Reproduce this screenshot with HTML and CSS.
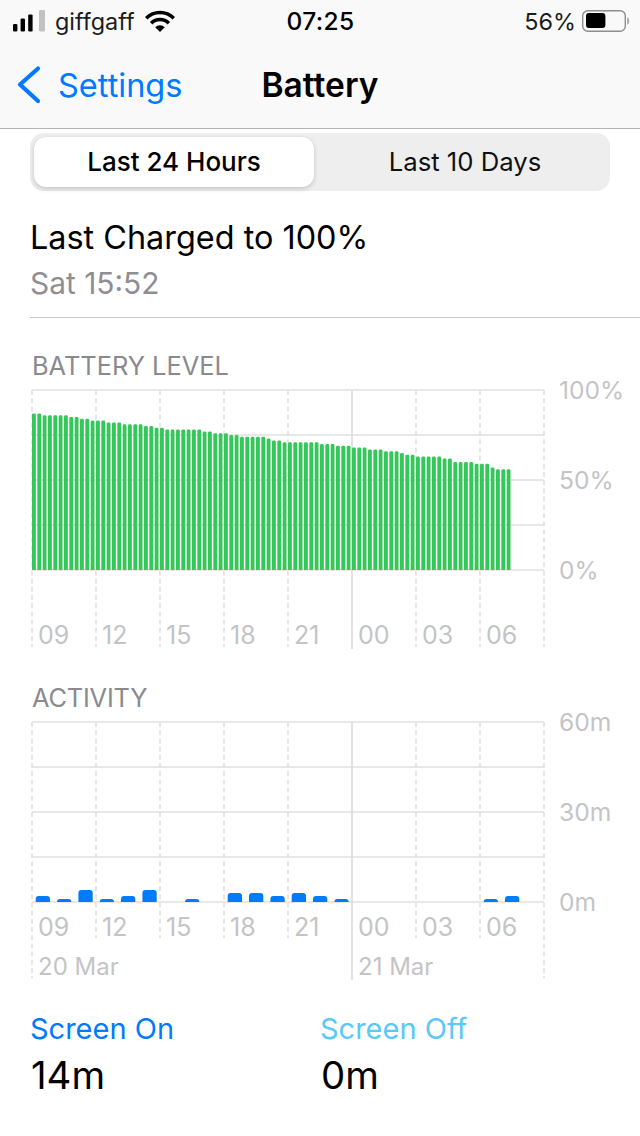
FILE: index.html
```html
<!DOCTYPE html>
<html lang="en">
<head>
<meta charset="utf-8">
<title>Battery</title>
<link rel="stylesheet" href="styles.css">
</head>
<body>
<header class="top">
  <div class="status">
    <div class="status-left">
      <svg class="signal" viewBox="0 0 34 22" width="34" height="22" aria-hidden="true">
        <rect x="0" y="14" width="4.4" height="7.4" rx="1.2"/>
        <rect x="7.6" y="8.4" width="4.4" height="13" rx="1.2"/>
        <rect x="15.2" y="4.4" width="4.4" height="17" rx="1.2"/>
        <rect class="off" x="26" y="0" width="6" height="21.4" rx="1.2"/>
      </svg>
      <span class="carrier">giffgaff</span>
      <svg class="wifi" viewBox="0 0 30 22" width="30" height="22" aria-hidden="true">
        <path class="arc" d="M1.2 8.2A19.5 19.5 0 0 1 28.8 8.2"/>
        <path class="arc" d="M6.16 13.16A12.5 12.5 0 0 1 23.84 13.16"/>
        <path d="M15 22L10.2 17.2A6.8 6.8 0 0 1 19.8 17.2Z"/>
      </svg>
    </div>
    <div class="time">07:25</div>
    <div class="status-right">
      <span class="pct">56%</span>
      <svg class="batt" viewBox="0 0 48 24" width="48" height="24" aria-hidden="true">
        <rect class="shell" x="0.7" y="1.7" width="42.6" height="20.6" rx="5"/>
        <rect x="4" y="4" width="19.4" height="15" rx="3"/>
        <path class="nub" d="M45.2 8.2C46.6 8.8 47.2 10 47.2 12S46.6 15.2 45.2 15.8Z"/>
      </svg>
    </div>
  </div>
  <nav class="nav">
    <a class="back">
      <svg class="chev" viewBox="0 0 24 40" width="24" height="40" aria-hidden="true"><path d="M21 3.5L3 19.5L21 36"/></svg>
      <span>Settings</span>
    </a>
    <h1>Battery</h1>
    <span></span>
  </nav>
</header>

<main>
  <div class="segment">
    <div class="seg seg-on">Last 24 Hours</div>
    <div class="seg">Last 10 Days</div>
  </div>

  <div class="charged">
    <div class="charged-title">Last Charged to 100%</div>
    <div class="charged-time">Sat 15:52</div>
  </div>

  <section class="panel panel-battery">
    <h2>BATTERY LEVEL</h2>
    <div class="chart">
      <svg class="grid" width="514" height="260" aria-hidden="true">
        <line class="h" x1="0" x2="512" y1="0" y2="0"/>
        <line class="h" x1="0" x2="512" y1="45" y2="45"/>
        <line class="h" x1="0" x2="512" y1="90" y2="90"/>
        <line class="h" x1="0" x2="512" y1="135" y2="135"/>
        <line class="h" x1="0" x2="512" y1="180" y2="180"/>
        <line class="d" x1="0" x2="0" y1="0" y2="257"/>
        <line class="d" x1="64" x2="64" y1="0" y2="257"/>
        <line class="d" x1="128" x2="128" y1="0" y2="257"/>
        <line class="d" x1="192" x2="192" y1="0" y2="257"/>
        <line class="d" x1="256" x2="256" y1="0" y2="257"/>
        <line class="s" x1="320" x2="320" y1="0" y2="259"/>
        <line class="d" x1="384" x2="384" y1="0" y2="257"/>
        <line class="d" x1="448" x2="448" y1="0" y2="257"/>
        <line class="d" x1="512" x2="512" y1="0" y2="257"/>
      </svg>
      <svg class="levels" viewBox="0 0 90 100" width="480" height="180" preserveAspectRatio="none" aria-hidden="true">
        <rect x="0" y="13" height="88"/><rect x="1" y="13" height="88"/>
        <rect x="2" y="14" height="87"/><rect x="3" y="14" height="87"/><rect x="4" y="14" height="87"/><rect x="5" y="14" height="87"/><rect x="6" y="14" height="87"/>
        <rect x="7" y="15" height="86"/><rect x="8" y="15" height="86"/>
        <rect x="9" y="16" height="85"/><rect x="10" y="16" height="85"/>
        <rect x="11" y="17" height="84"/><rect x="12" y="17" height="84"/><rect x="13" y="17" height="84"/>
        <rect x="14" y="18" height="83"/><rect x="15" y="18" height="83"/><rect x="16" y="18" height="83"/>
        <rect x="17" y="19" height="82"/><rect x="18" y="19" height="82"/><rect x="19" y="19" height="82"/><rect x="20" y="19" height="82"/>
        <rect x="21" y="20" height="81"/><rect x="22" y="20" height="81"/>
        <rect x="23" y="21" height="80"/><rect x="24" y="21" height="80"/>
        <rect x="25" y="22" height="79"/><rect x="26" y="22" height="79"/><rect x="27" y="22" height="79"/><rect x="28" y="22" height="79"/><rect x="29" y="22" height="79"/><rect x="30" y="22" height="79"/><rect x="31" y="22" height="79"/>
        <rect x="32" y="23" height="78"/><rect x="33" y="23" height="78"/>
        <rect x="34" y="24" height="77"/><rect x="35" y="24" height="77"/><rect x="36" y="24" height="77"/>
        <rect x="37" y="25" height="76"/><rect x="38" y="25" height="76"/>
        <rect x="39" y="26" height="75"/><rect x="40" y="26" height="75"/><rect x="41" y="26" height="75"/><rect x="42" y="26" height="75"/><rect x="43" y="26" height="75"/>
        <rect x="44" y="27" height="74"/>
        <rect x="45" y="28" height="73"/><rect x="46" y="28" height="73"/>
        <rect x="47" y="29" height="72"/><rect x="48" y="29" height="72"/><rect x="49" y="29" height="72"/><rect x="50" y="29" height="72"/><rect x="51" y="29" height="72"/><rect x="52" y="29" height="72"/><rect x="53" y="29" height="72"/>
        <rect x="54" y="30" height="71"/><rect x="55" y="30" height="71"/><rect x="56" y="30" height="71"/>
        <rect x="57" y="31" height="70"/><rect x="58" y="31" height="70"/><rect x="59" y="31" height="70"/>
        <rect x="60" y="32" height="69"/><rect x="61" y="32" height="69"/><rect x="62" y="32" height="69"/>
        <rect x="63" y="33" height="68"/><rect x="64" y="33" height="68"/><rect x="65" y="33" height="68"/>
        <rect x="66" y="34" height="67"/><rect x="67" y="34" height="67"/><rect x="68" y="34" height="67"/>
        <rect x="69" y="35" height="66"/>
        <rect x="70" y="36" height="65"/><rect x="71" y="36" height="65"/>
        <rect x="72" y="37" height="64"/><rect x="73" y="37" height="64"/><rect x="74" y="37" height="64"/><rect x="75" y="37" height="64"/><rect x="76" y="37" height="64"/>
        <rect x="77" y="38" height="63"/><rect x="78" y="38" height="63"/>
        <rect x="79" y="40" height="61"/><rect x="80" y="40" height="61"/><rect x="81" y="40" height="61"/><rect x="82" y="40" height="61"/>
        <rect x="83" y="41" height="60"/><rect x="84" y="41" height="60"/><rect x="85" y="41" height="60"/>
        <rect x="86" y="43" height="58"/>
        <rect x="87" y="44" height="57"/><rect x="88" y="44" height="57"/><rect x="89" y="44" height="57"/>
      </svg>
      <ul class="yaxis"><li>100%</li><li>50%</li><li>0%</li></ul>
      <div class="ticks">
        <span>09</span><span>12</span><span>15</span><span>18</span><span>21</span><span>00</span><span>03</span><span>06</span>
      </div>
    </div>
  </section>

  <section class="panel panel-activity">
    <h2>ACTIVITY</h2>
    <div class="chart">
      <svg class="grid" width="514" height="258" aria-hidden="true">
        <line class="h" x1="0" x2="512" y1="0" y2="0"/>
        <line class="h" x1="0" x2="512" y1="45" y2="45"/>
        <line class="h" x1="0" x2="512" y1="90" y2="90"/>
        <line class="h" x1="0" x2="512" y1="135" y2="135"/>
        <line class="h" x1="0" x2="512" y1="180" y2="180"/>
        <line class="d" x1="0" x2="0" y1="0" y2="256"/>
        <line class="d" x1="64" x2="64" y1="0" y2="216"/>
        <line class="d" x1="128" x2="128" y1="0" y2="216"/>
        <line class="d" x1="192" x2="192" y1="0" y2="216"/>
        <line class="d" x1="256" x2="256" y1="0" y2="216"/>
        <line class="s" x1="320" x2="320" y1="0" y2="258"/>
        <line class="d" x1="384" x2="384" y1="0" y2="216"/>
        <line class="d" x1="448" x2="448" y1="0" y2="216"/>
        <line class="d" x1="512" x2="512" y1="0" y2="256"/>
      </svg>
      <svg class="usage" width="512" height="180" aria-hidden="true">
        <rect x="3.7" y="174" height="10"/>
        <rect x="25" y="177" height="10"/>
        <rect x="46.4" y="168" height="16"/>
        <rect x="67.7" y="177" height="10"/>
        <rect x="89" y="174" height="10"/>
        <rect x="110.4" y="168" height="16"/>
        <rect x="153" y="177" height="10"/>
        <rect x="195.7" y="171" height="13"/>
        <rect x="217" y="171" height="13"/>
        <rect x="238.4" y="174" height="10"/>
        <rect x="259.7" y="171" height="13"/>
        <rect x="281" y="174" height="10"/>
        <rect x="302.4" y="177" height="10"/>
        <rect x="451.7" y="177" height="10"/>
        <rect x="473" y="174" height="10"/>
      </svg>
      <ul class="yaxis"><li>60m</li><li>30m</li><li>0m</li></ul>
      <div class="ticks">
        <span>09</span><span>12</span><span>15</span><span>18</span><span>21</span><span>00</span><span>03</span><span>06</span>
      </div>
      <div class="dates">
        <span>20 Mar</span><span>21 Mar</span>
      </div>
    </div>
  </section>

  <section class="legend">
    <div class="legend-item">
      <div class="legend-label on">Screen On</div>
      <div class="legend-value">14m</div>
    </div>
    <div class="legend-item">
      <div class="legend-label off">Screen Off</div>
      <div class="legend-value">0m</div>
    </div>
  </section>
</main>
</body>
</html>
```
FILE: styles.css
```css
* { box-sizing: border-box; }
html, body { margin: 0; padding: 0; }
body {
  width: 640px;
  height: 1136px;
  overflow: hidden;
  background: #fff;
  color: #000;
  font-family: Inter, "Liberation Sans", sans-serif;
}

.top {
  height: 129px;
  background: #f9f9f9;
  border-bottom: 1px solid #b3b3b3;
}
.status {
  height: 42px;
  padding: 0 12px 0 13px;
  display: grid;
  grid-template-columns: 1fr auto 1fr;
  align-items: center;
  font-size: 23.4px;
}
.status-left { display: flex; align-items: center; }
.signal { fill: #000; margin-top: -1px; }
.signal .off { fill: #c2c2c2; }
.carrier { margin-left: 8px; color: #1c1c1e; }
.wifi { margin-left: 10px; fill: #000; margin-top: -1px; }
.wifi .arc { fill: none; stroke: #000; stroke-width: 3.5; }
.time { font-size: 24.5px; font-weight: 500; letter-spacing: 0.4px; }
.status-right { display: flex; align-items: center; justify-content: flex-end; }
.pct { margin-right: 6px; color: #1c1c1e; }
.batt { fill: #000; margin-right: -2px; }
.batt .shell { fill: none; stroke: #8e8e8e; stroke-width: 1.4; }
.batt .nub { fill: #a8a8a8; }

.nav {
  height: 86px;
  display: grid;
  grid-template-columns: 1fr auto 1fr;
  align-items: center;
}
.back { display: flex; align-items: center; padding-left: 17px; color: #007aff; font-size: 32.5px; }
.chev { fill: none; stroke: #007aff; stroke-width: 4.2; stroke-linecap: round; stroke-linejoin: round; margin-right: 17px; }
.nav h1 { margin: 0; font-size: 33.5px; font-weight: 600; }

.segment {
  margin: 4px 30px 0;
  height: 58px;
  padding: 4px;
  display: flex;
  gap: 10px;
  background: #eeeeef;
  border-radius: 14px;
}
.seg {
  flex: 1;
  display: flex;
  align-items: center;
  justify-content: center;
  padding-bottom: 2px;
  font-size: 25.7px;
  font-weight: 400;
  color: #111;
}
.seg-on {
  flex: 0 0 280px;
  font-size: 26px;
  font-weight: 500;
  color: #000;
  background: #fff;
  border-radius: 12px;
  box-shadow: 0 2px 5px rgba(0, 0, 0, 0.16), 0 0 1px rgba(0, 0, 0, 0.1);
}

.charged {
  margin-left: 30px;
  padding: 25px 0 0 0;
  height: 127px;
  border-bottom: 1px solid #c8c8c8;
}
.charged-title { font-size: 32.4px; line-height: 44px; }
.charged-time { margin-top: 1px; font-size: 29.9px; line-height: 44px; color: #8e8e93; }

.panel { padding: 0 0 0 32px; }
.panel h2 {
  margin: 0 0 10px 0;
  font-size: 25.4px;
  line-height: 28px;
  font-weight: 400;
  color: #8a8a8e;
}
.panel-activity h2 { letter-spacing: -0.2px; }
.panel-battery { padding-top: 34px; height: 366px; }
.panel-activity { height: 328px; }

.chart { position: relative; width: 608px; }
.grid { position: absolute; left: 0; top: 0; overflow: visible; fill: none; }
.grid .h { stroke: #e1e1e1; stroke-width: 1.4; }
.grid .d { stroke: #e2e2e2; stroke-width: 1.7; stroke-dasharray: 5 3.2; }
.grid .s { stroke: #d8d8d8; stroke-width: 1.5; }

.levels { position: absolute; left: 0; top: 0; }
.levels rect { width: 0.72px; rx: 0.28px; ry: 0.8px; fill: #34c759; }
.usage { position: absolute; left: 0; top: 0; }
.usage rect { width: 14.3px; rx: 3px; ry: 3px; fill: #007aff; }

.yaxis {
  position: absolute;
  left: 527px;
  top: -12px;
  margin: 0;
  padding: 0;
  list-style: none;
  height: 204px;
  display: flex;
  flex-direction: column;
  justify-content: space-between;
  font-size: 24.6px;
  line-height: 24px;
  color: #c4c4c6;
}

.ticks {
  position: relative;
  display: flex;
  padding-left: 6px;
  font-size: 25px;
  line-height: 24px;
  color: #c4c4c6;
}
.ticks span { flex: 0 0 64px; }
.panel-battery .ticks { padding-top: 233px; }
.panel-activity .ticks { padding-top: 193px; }

.dates {
  position: relative;
  display: grid;
  grid-template-columns: 320px auto;
  margin-top: 16px;
  padding-left: 6px;
  font-size: 24px;
  line-height: 24px;
  color: #c4c4c6;
}

.legend { display: flex; padding: 0 0 0 30px; }
.legend-item { flex: 0 0 290px; }
.legend-label { font-size: 29px; line-height: 34px; }
.legend-label.on { color: #007aff; }
.legend-label.off { color: #5ac8fa; }
.legend-value { margin: 6px 0 0 1px; font-size: 38.4px; line-height: 46px; }
```
